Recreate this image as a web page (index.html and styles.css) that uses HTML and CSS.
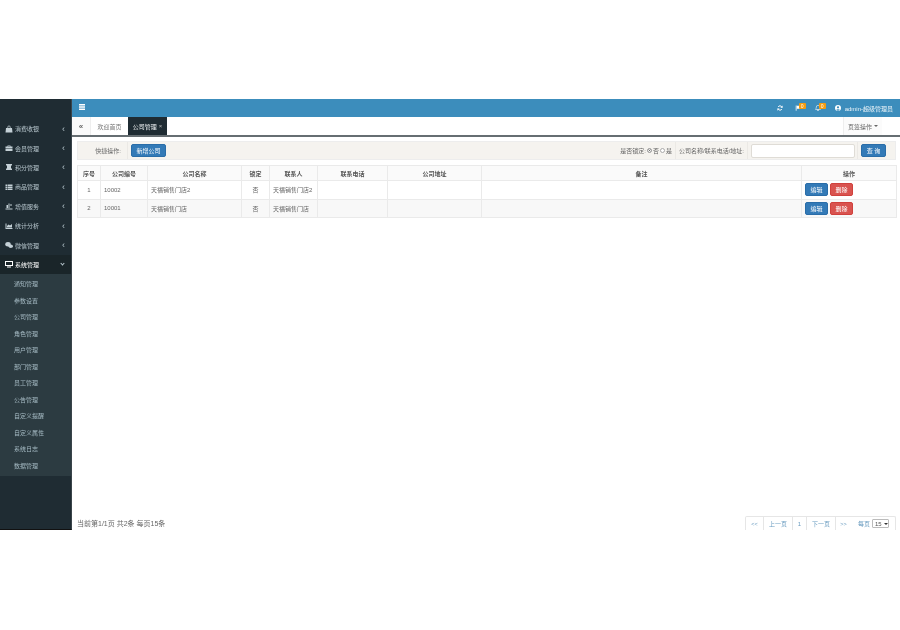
FILE: index.html
```html
<!DOCTYPE html>
<html lang="zh">
<head>
<meta charset="utf-8">
<title>公司管理</title>
<link rel="stylesheet" href="styles.css">
</head>
<body>
<div class="app">
  <aside class="sidebar">
    <ul class="menu">
      <li class="item"><svg class="ico" viewBox="0 0 16 16"><path d="M2 6h12l1 9H1zM5 6V4a3 3 0 0 1 6 0v2H9.600V4a1.600 1.600 0 0 0-3.200 0v2z"/></svg><span class="label">消费收银</span><span class="arrow">‹</span></li>
      <li class="item"><svg class="ico" viewBox="0 0 16 16"><path d="M1 5h14v4H1zM1 10h14v4H1zM5 5V3h6v2H9.500V4h-3v1z"/></svg><span class="label">会员管理</span><span class="arrow">‹</span></li>
      <li class="item"><svg class="ico" viewBox="0 0 16 16"><path d="M2 2h12v3h-2v6h2v3H2v-3h2V5H2z"/></svg><span class="label">积分管理</span><span class="arrow">‹</span></li>
      <li class="item"><svg class="ico" viewBox="0 0 16 16"><path d="M1 3h3v3H1zM5 3h10v3H5zM1 7h3v3H1zM5 7h10v3H5zM1 11h3v3H1zM5 11h10v3H5z"/></svg><span class="label">商品管理</span><span class="arrow">‹</span></li>
      <li class="item"><svg class="ico" viewBox="0 0 16 16"><path d="M1 13h14v2H1zM3 6h3v6H3zM7 3h2v9H7zM10 5h4v2h-4z"/></svg><span class="label">增值服务</span><span class="arrow">‹</span></li>
      <li class="item"><svg class="ico" viewBox="0 0 16 16"><path d="M1 3h2v9h12v2H1zM4 8l3-3 3 2 4-3v7H4z"/></svg><span class="label">统计分析</span><span class="arrow">‹</span></li>
      <li class="item"><svg class="ico" viewBox="0 0 16 16"><ellipse cx="6" cy="6.500" rx="5.500" ry="4.500"/><ellipse cx="11.500" cy="10.500" rx="4.500" ry="3.500"/></svg><span class="label">微信管理</span><span class="arrow">‹</span></li>
      <li class="item item-open"><svg class="ico" viewBox="0 0 16 16"><path fill-rule="evenodd" d="M0 2h16v10H0zM2 4v6h12V4zM4 13h8v2H4z"/></svg><span class="label">系统管理</span><span class="arrow-down"></span></li>
    </ul>
    <ul class="submenu">
      <li>通知管理</li>
      <li>参数设置</li>
      <li>公司管理</li>
      <li>角色管理</li>
      <li>用户管理</li>
      <li>部门管理</li>
      <li>员工管理</li>
      <li>公告管理</li>
      <li>自定义提醒</li>
      <li>自定义属性</li>
      <li>系统日志</li>
      <li>数据管理</li>
    </ul>
  </aside>
  <div class="main">
    <header class="topbar">
      <svg class="bars" viewBox="0 0 8 8"><path d="M1 1h6v1.400H1zM1 3.300h6v1.400H1zM1 5.600h6V7H1z"/></svg>
      <div class="top-right">
        <svg class="top-ico" viewBox="0 0 16 16"><path fill="none" stroke="#fff" stroke-width="2.600" d="M13 6a5.500 5.500 0 0 0-10-1M3 10a5.500 5.500 0 0 0 10 1"/><path d="M15 1v6H9zM1 15V9h6z"/></svg>
        <span class="notice"><svg class="top-ico" viewBox="0 0 16 16"><path d="M2 1h2v14H2zM5 2h9v8H5z"/></svg><span class="badge">0</span></span>
        <span class="notice"><svg class="top-ico" viewBox="0 0 16 16"><path d="M8 1a4.500 4.500 0 0 1 4.500 4.500c0 4 2 5.500 2 6.500h-13c0-1 2-2.500 2-6.500A4.500 4.500 0 0 1 8 1zM6 13h4a2 2 0 0 1-4 0z" fill="none" stroke="#fff" stroke-width="1.500"/></svg><span class="badge">0</span></span>
        <span class="user"><svg class="top-ico" viewBox="0 0 16 16"><path fill-rule="evenodd" d="M8 0a8 8 0 1 1 0 16A8 8 0 0 1 8 0zM8 3a3 3 0 1 0 0 6 3 3 0 0 0 0-6zM3.500 12.500a6 6 0 0 0 9 0C11.500 10.500 4.500 10.500 3.500 12.500z"/></svg>admin-超级管理员</span>
      </div>
    </header>
    <nav class="tabs">
      <span class="tab-back">«</span>
      <span class="tab">欢迎首页</span>
      <span class="tab tab-active">公司管理<i class="tab-close">×</i></span>
      <span class="tab-ops">页签操作 <i class="caret"></i></span>
    </nav>
    <section class="content">
      <div class="toolbar">
        <span class="tool-label">快捷操作:</span>
        <span class="tool-cell"><button class="btn btn-blue btn-add">新增公司</button></span>
        <span class="tool-lock">是否锁定:<span class="radio radio-on"></span>否<span class="radio"></span>是</span>
        <span class="tool-search">公司名称/联系电话/地址:</span>
        <span class="tool-input"><input class="search" type="text"></span>
        <span class="tool-query"><button class="btn btn-blue btn-query">查 询</button></span>
      </div>
      <table class="grid">
        <thead>
          <tr>
            <th class="c1">序号</th><th class="c2">公司编号</th><th class="c3">公司名称</th><th class="c4">锁定</th><th class="c5">联系人</th><th class="c6">联系电话</th><th class="c7">公司地址</th><th class="c8">备注</th><th class="c9">操作</th>
          </tr>
        </thead>
        <tbody>
          <tr>
            <td class="mid">1</td><td>10002</td><td>天福销售门店2</td><td class="mid">否</td><td>天福销售门店2</td><td></td><td></td><td></td>
            <td><span class="ops"><button class="btn btn-blue btn-op">编辑</button><button class="btn btn-red btn-op">删除</button></span></td>
          </tr>
          <tr class="alt">
            <td class="mid">2</td><td>10001</td><td>天福销售门店</td><td class="mid">否</td><td>天福销售门店</td><td></td><td></td><td></td>
            <td><span class="ops"><button class="btn btn-blue btn-op">编辑</button><button class="btn btn-red btn-op">删除</button></span></td>
          </tr>
        </tbody>
      </table>
      <footer class="foot">
        <span class="summary">当前第1/1页 共2条 每页15条</span>
        <div class="pager">
          <span class="pg pg-nav">&lt;&lt;</span><span class="pg pg-text">上一页</span><span class="pg pg-num">1</span><span class="pg pg-text">下一页</span><span class="pg pg-nav">&gt;&gt;</span>
          <span class="pg-size">每页<span class="size-box">15<i class="size-caret"></i></span></span>
        </div>
      </footer>
    </section>
  </div>
</div>
</body>
</html>
```
FILE: styles.css
```css
* { box-sizing: border-box; }
html, body { margin: 0; padding: 0; background: #fff; }
body {
  padding-top: 99px;
  font-family: "Liberation Sans", "Noto Sans CJK SC", sans-serif;
  font-size: 6px;
  color: #666;
}
ul { list-style: none; margin: 0; padding: 0; }
i { font-style: normal; }
.app { display: flex; height: 431px; width: 900px; will-change: transform; }

/* sidebar */
.sidebar {
  width: 72px;
  flex: none;
  background: #1f2c33;
  padding-top: 20px;
  border-right: 1px solid #3a444a;
  border-bottom: 1px solid #111;
}
.item {
  display: flex;
  align-items: center;
  height: 19.4px;
  padding-left: 5px;
  color: #b8c7ce;
}
.item-open { background: #1a2529; color: #fff; }
.ico { width: 8px; height: 8px; fill: #c4d0d6; flex: none; margin-right: 2px; }
.item-open .ico { fill: #fff; }
.label { flex: 1; }
.arrow { width: 9px; flex: none; font-size: 9px; line-height: 8px; color: #b8c7ce; }
.arrow-down {
  width: 3px; height: 3px; flex: none; margin-right: 7px; margin-top: -2px;
  border-right: 1px solid #b8c7ce; border-bottom: 1px solid #b8c7ce;
  transform: rotate(45deg);
}
.submenu { background: #2c3b41; padding: 2px 0 2px; }
.submenu li {
  height: 16.5px;
  line-height: 16.5px;
  padding-left: 14px;
  color: #a5bac3;
}

/* main */
.main { flex: 1; display: flex; flex-direction: column; min-width: 0; }
.topbar {
  flex: none;
  height: 18px;
  background: #3c8dbc;
  display: flex;
  align-items: center;
  justify-content: space-between;
  padding: 0 7px 0 6px;
  color: #fff;
}
.bars { width: 8px; height: 8px; fill: #fff; margin-bottom: 2px; }
.top-right { display: flex; align-items: center; }
.top-ico { width: 6px; height: 6px; fill: #fff; flex: none; }
.top-right > .top-ico { margin-right: 12px; }
.notice { position: relative; margin-right: 14px; display: flex; }
.badge {
  position: absolute;
  left: 4px;
  top: -2px;
  width: 7px;
  height: 6px;
  border-radius: 1px;
  background: #f39c12;
  color: #fff;
  font-size: 5px;
  line-height: 6px;
  text-align: center;
}
.user { display: flex; align-items: center; gap: 4px; color: #eaf3f8; }

.tabs {
  flex: none;
  height: 20px;
  display: flex;
  background: #fff;
  border-bottom: 2px solid #666e72;
  color: #777;
}
.tab-back {
  width: 19px;
  display: flex; align-items: center; justify-content: center;
  background: #fafafa;
  font-size: 8px;
  font-weight: 700;
  color: #666;
  border-right: 1px solid #eee;
}
.tab {
  display: flex; align-items: center; justify-content: center;
  width: 37px;
}
.tab-active { width: 39px; background: #1f2c33; color: #f0f3f4; }
.tab-close { margin-left: 2px; color: #bbb; }
.tab-ops {
  margin-left: auto;
  margin-right: 18px;
  width: 39px;
  display: flex; align-items: center; justify-content: center; gap: 2px;
  background: #fbfbfb;
  border-left: 1px solid #eee;
  color: #666;
}
.caret { border: 2px solid transparent; border-top-color: #666; border-bottom: 0; }

.content { flex: 1; display: flex; flex-direction: column; padding: 4px 4px 0 5px; min-height: 0; }
.toolbar {
  flex: none;
  height: 19px;
  display: flex;
  align-items: stretch;
  background: #f5f3ef;
  border: 1px solid #ededed;
  color: #666;
  margin-bottom: 5px;
  white-space: nowrap;
}
.tool-label { width: 50px; display: flex; align-items: center; justify-content: flex-end; padding-right: 6px; border-right: 1px solid #ebe9e5; }
.tool-cell { display: flex; align-items: center; padding-left: 3px; flex: 1; }
.tool-lock { display: flex; align-items: center; padding-right: 3px; border-right: 1px solid #ebe9e5; }
.tool-search { display: flex; align-items: center; width: 71px; padding-left: 3px; }
.tool-input { display: flex; align-items: center; padding: 0 2px 0 3px; border-left: 1px solid #ebe9e5; border-right: 1px solid #ebe9e5; }
.tool-query { display: flex; align-items: center; padding: 0 9px 0 3px; }
.search { width: 104px; height: 14px; border: 1px solid #dfdcd6; border-radius: 2px; background: #fff; padding: 0; display: block; }
.radio {
  width: 5px; height: 5px; border-radius: 50%;
  border: 1px solid #aaa; background: #fff;
  margin: 0 .5px 0 1.5px;
}
.radio-on { background: #444; box-shadow: inset 0 0 0 1px #fff; }

.btn {
  border: 1px solid #2a6da8;
  border-radius: 2px;
  color: #fff;
  font: inherit;
  padding: 0;
  display: block;
}
.btn-blue { background: #337ab7; }
.btn-red { background: #d9534f; border-color: #d0413d; }
.btn-add { width: 35px; height: 13px; }
.btn-query { width: 25px; height: 13px; }
.btn-op { width: 23px; height: 13px; }
.ops { display: flex; gap: 2px; }

.grid {
  flex: none;
  width: 819px;
  border-collapse: collapse;
  table-layout: fixed;
  border: 1px solid #eaeaea;
  color: #666;
}
.grid th, .grid td { border: 1px solid #eaeaea; padding: 0; }
.grid th { height: 15px; background: #fafafa; font-weight: 700; text-align: center; color: #555; }
.grid td { height: 18.5px; padding-left: 3px; }
.grid td.mid { text-align: center; padding-left: 0; }
.alt td { background: #f8f8f8; }
.c1 { width: 23px; }
.c2 { width: 47px; }
.c3 { width: 94px; }
.c4 { width: 28px; }
.c5 { width: 48px; }
.c6 { width: 70px; }
.c7 { width: 94px; }
.c8 { width: 320px; }
.c9 { width: 95px; }

.foot {
  margin-top: auto;
  display: flex;
  justify-content: space-between;
  align-items: center;
  height: 14px;
}
.summary { font-size: 7px; color: #666; }
.pager { display: flex; align-items: center; height: 14px; color: #6a9cc0; border: 1px solid #e6e6e6; border-bottom: 0; border-radius: 2px 2px 0 0; }
.pg { height: 100%; display: flex; align-items: center; justify-content: center; border-right: 1px solid #e6e6e6; }
.pg-nav { width: 18px; font-size: 5.5px; }
.pg-text { width: 29px; }
.pg-num { width: 14px; }
.pg-nav:nth-child(5) { width: 15px; border-right: 0; }
.pg-size { display: flex; align-items: center; padding: 0 6px 0 7px; gap: 2px; }
.size-box { display: flex; align-items: center; gap: 2px; height: 9px; width: 17px; padding-left: 2px; border: 1px solid #bbb; border-radius: 1px; color: #555; }
.size-caret { border: 2px solid transparent; border-top-color: #333; border-bottom: 0; }
```
